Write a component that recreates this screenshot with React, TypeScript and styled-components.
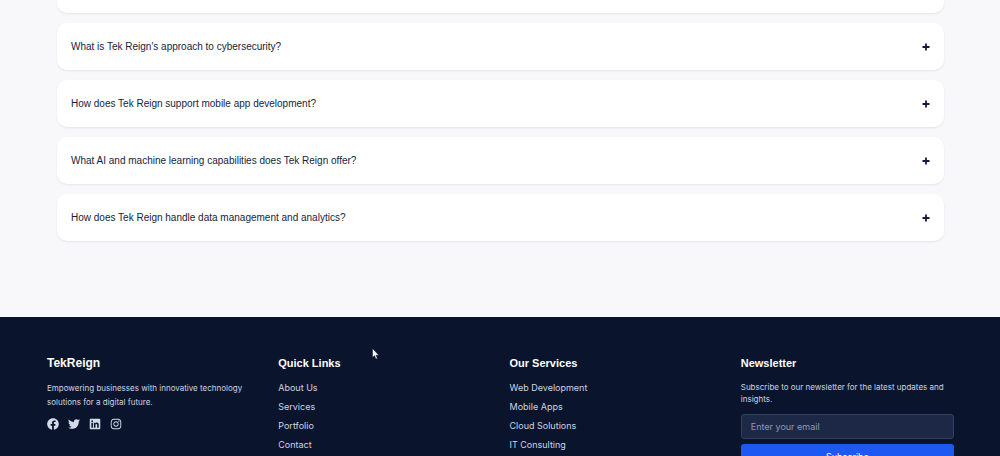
import React from "react";
import styled, { createGlobalStyle } from "styled-components";
import { FaFacebook, FaTwitter, FaLinkedin, FaInstagram } from "react-icons/fa";

const GlobalStyle = createGlobalStyle`
  * { box-sizing: border-box; }
  body { margin: 0; background: #f8f8fb; }
`;

const Page = styled.div`
  height: 100vh;
  overflow: hidden;
  display: flex;
  flex-direction: column;
  background: #f8f8fb;
  font-family: Inter, sans-serif;
`;

const Faq = styled.main`
  flex: none;
  display: flex;
  flex-direction: column;
  gap: 10px;
  padding: 0 56px 76px 57px;
`;

const Card = styled.button`
  display: flex;
  align-items: center;
  justify-content: space-between;
  height: 47px;
  padding: 0 14px;
  border: 0;
  border-radius: 10px;
  background: #fff;
  box-shadow: 0 1px 2px rgba(20, 25, 50, 0.09);
  color: #161d3c;
  font: 10px/16px "Liberation Sans", Arial, sans-serif;
  text-align: left;
`;

const CardEnd = styled.div`
  height: 13px;
  border-radius: 0 0 10px 10px;
  background: #fff;
  box-shadow: 0 1px 2px rgba(20, 25, 50, 0.09);
`;

const Footer = styled.footer`
  flex: 1 0 auto;
  display: grid;
  grid-template-columns: repeat(4, 1fr);
  gap: 18px;
  padding: 38px 46px 24px 47px;
  background: #0a142d;
  color: #cdd4e2;
`;

const Column = styled.section`
  display: flex;
  flex-direction: column;
  align-items: stretch;
`;

const Brand = styled.h2`
  margin: 0 0 10px;
  color: #fff;
  font: bold 12px/16px "Liberation Sans", Arial, sans-serif;
`;

const Heading = styled.h3`
  margin: 0 0 10px;
  color: #fff;
  font: bold 11px/16px "Liberation Sans", Arial, sans-serif;
`;

const Text = styled.p<{ $line: number }>`
  margin: 0 0 9px;
  font-size: 8px;
  line-height: ${(p) => p.$line}px;
`;

const Socials = styled.nav`
  display: flex;
  gap: 9px;
`;

const Social = styled.a`
  display: flex;
  color: #d3dae8;
  font-size: 12px;
`;

const Links = styled.ul`
  display: flex;
  flex-direction: column;
  gap: 5px;
  margin: 0;
  padding: 0;
  list-style: none;
  font-size: 9px;
  line-height: 14px;
`;

const Link = styled.a`
  display: block;
  color: inherit;
  text-decoration: none;
`;

const Form = styled.form`
  display: flex;
  flex-direction: column;
  gap: 5px;
`;

const Email = styled.input`
  width: 100%;
  height: 25px;
  padding: 0 9px;
  border: 1px solid #334060;
  border-radius: 3px;
  background: #1d2847;
  color: #fff;
  font: 9px Inter, sans-serif;
  &::placeholder { color: #8d98b3; opacity: 1; }
`;

const Submit = styled.button`
  height: 24px;
  border: 0;
  border-radius: 3px;
  background: #1d58f3;
  color: #fff;
  font: 9px Inter, sans-serif;
`;

const Pointer = styled.svg`
  position: absolute;
  left: 372px;
  top: 348px;
  width: 8px;
  height: 12px;
`;

const questions = [
  "What is Tek Reign's approach to cybersecurity?",
  "How does Tek Reign support mobile app development?",
  "What AI and machine learning capabilities does Tek Reign offer?",
  "How does Tek Reign handle data management and analytics?",
];

const groups = [
  { title: "Quick Links", links: ["About Us", "Services", "Portfolio", "Contact"] },
  { title: "Our Services", links: ["Web Development", "Mobile Apps", "Cloud Solutions", "IT Consulting"] },
];

const socials = [
  { name: "Facebook", Icon: FaFacebook },
  { name: "Twitter", Icon: FaTwitter },
  { name: "LinkedIn", Icon: FaLinkedin },
  { name: "Instagram", Icon: FaInstagram },
];

export default function App() {
  return (
    <Page>
      <GlobalStyle />
      <Faq>
        <CardEnd />
        {questions.map((q) => (
          <Card key={q} type="button" aria-expanded={false}>
            <span>{q}</span>
            <svg width="8" height="8" viewBox="0 0 8 8" aria-hidden="true">
              <path d="M4 0.5V7.5M0.5 4H7.5" stroke="#141a48" strokeWidth="1.8" />
            </svg>
          </Card>
        ))}
      </Faq>
      <Footer>
        <Column>
          <Brand>TekReign</Brand>
          <Text $line={14}>Empowering businesses with innovative technology solutions for a digital future.</Text>
          <Socials aria-label="Social media">
            {socials.map(({ name, Icon }) => (
              <Social key={name} href="#" aria-label={name}><Icon /></Social>
            ))}
          </Socials>
        </Column>
        {groups.map((g) => (
          <Column key={g.title}>
            <Heading>{g.title}</Heading>
            <Links>
              {g.links.map((l) => (
                <li key={l}><Link href="#">{l}</Link></li>
              ))}
            </Links>
          </Column>
        ))}
        <Column>
          <Heading>Newsletter</Heading>
          <Text $line={12}>Subscribe to our newsletter for the latest updates and insights.</Text>
          <Form>
            <Email type="email" placeholder="Enter your email" aria-label="Email address" />
            <Submit type="submit">Subscribe</Submit>
          </Form>
        </Column>
      </Footer>
      <Pointer viewBox="0 0 8 12" aria-hidden="true">
        <path d="M0.5 0.5V9.5L2.5 7.6L3.9 11L5.4 10.4L4 7.2H6.8Z" fill="#fff" stroke="#0a142d" strokeWidth="0.5" />
      </Pointer>
    </Page>
  );
}
